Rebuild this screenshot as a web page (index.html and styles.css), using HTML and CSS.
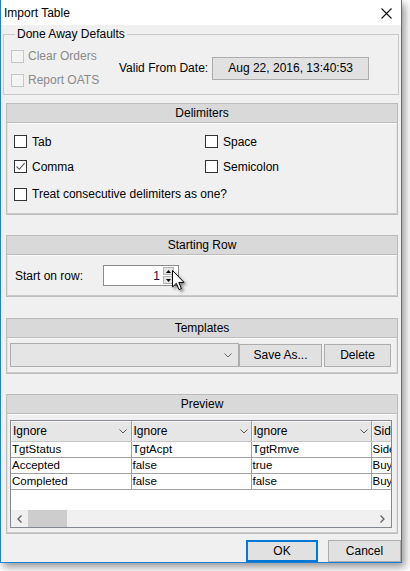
FILE: index.html
```html
<!DOCTYPE html>
<html>
<head>
<meta charset="utf-8">
<title>Import Table</title>
<link rel="stylesheet" href="styles.css">
</head>
<body>
<div class="window">
  <div class="titlebar">
    <span class="title">Import Table</span>
    <svg class="close" width="11" height="11" viewBox="0 0 11 11"><path d="M0.5 0.5L10.5 10.5M10.5 0.5L0.5 10.5" stroke="#111" stroke-width="1.1" fill="none"/></svg>
  </div>
  <div class="content">
    <fieldset class="group">
      <legend>Done Away Defaults</legend>
      <div class="group-row">
        <div class="checks">
          <div class="check disabled"><span class="box"></span><span>Clear Orders</span></div>
          <div class="check disabled"><span class="box"></span><span>Report OATS</span></div>
        </div>
        <span class="date-label">Valid From Date:</span>
        <span class="date-box">Aug 22, 2016, 13:40:53</span>
      </div>
    </fieldset>

    <section class="panel delims">
      <div class="panel-head">Delimiters</div>
      <div class="panel-body delim-grid">
        <div class="check"><span class="box"></span><span>Tab</span></div>
        <div class="check"><span class="box"></span><span>Space</span></div>
        <div class="check"><span class="box checked"><svg width="11" height="11" viewBox="0 0 11 11"><path d="M1.5 5.5L4.3 8.3L9.6 2.2" stroke="#555" stroke-width="1.1" fill="none"/></svg></span><span>Comma</span></div>
        <div class="check"><span class="box"></span><span>Semicolon</span></div>
        <div class="check wide"><span class="box"></span><span>Treat consecutive delimiters as one?</span></div>
      </div>
    </section>

    <section class="panel start">
      <div class="panel-head">Starting Row</div>
      <div class="panel-body start-body">
        <span class="start-label">Start on row:</span>
        <div class="spinner">
          <span class="spin-value">1</span>
          <div class="spin-buttons">
            <span class="spin-btn"><svg width="7" height="4" viewBox="0 0 7 4"><path d="M3.5 0L7 4H0Z" fill="#000"/></svg></span>
            <span class="spin-btn"><svg width="7" height="4" viewBox="0 0 7 4"><path d="M0 0H7L3.5 4Z" fill="#000"/></svg></span>
          </div>
        </div>
      </div>
    </section>

    <section class="panel templates">
      <div class="panel-head">Templates</div>
      <div class="panel-body tmpl-body">
        <div class="combo"><svg width="8" height="5" viewBox="0 0 8 5"><path d="M0.5 0.5L4 4L7.5 0.5" stroke="#666" fill="none"/></svg></div>
        <button class="btn save">Save As...</button>
        <button class="btn delete">Delete</button>
      </div>
    </section>

    <section class="panel preview">
      <div class="panel-head">Preview</div>
      <div class="panel-body preview-body">
        <div class="grid">
          <div class="grid-view">
            <table class="tbl">
              <thead>
                <tr>
                  <th><span>Ignore</span><svg width="8" height="5" viewBox="0 0 8 5"><path d="M0.5 0.5L4 4L7.5 0.5" stroke="#555" fill="none"/></svg></th>
                  <th><span>Ignore</span><svg width="8" height="5" viewBox="0 0 8 5"><path d="M0.5 0.5L4 4L7.5 0.5" stroke="#555" fill="none"/></svg></th>
                  <th><span>Ignore</span><svg width="8" height="5" viewBox="0 0 8 5"><path d="M0.5 0.5L4 4L7.5 0.5" stroke="#555" fill="none"/></svg></th>
                  <th><span>Side</span><svg width="8" height="5" viewBox="0 0 8 5"><path d="M0.5 0.5L4 4L7.5 0.5" stroke="#555" fill="none"/></svg></th>
                </tr>
              </thead>
              <tbody>
                <tr><td>TgtStatus</td><td>TgtAcpt</td><td>TgtRmve</td><td>Side</td></tr>
                <tr><td>Accepted</td><td>false</td><td>true</td><td>Buy</td></tr>
                <tr><td>Completed</td><td>false</td><td>false</td><td>Buy</td></tr>
              </tbody>
            </table>
          </div>
          <div class="hscroll">
            <span class="arrow"><svg width="5" height="8" viewBox="0 0 5 8"><path d="M4.5 0.5L1 4L4.5 7.5" stroke="#606060" stroke-width="1.3" fill="none"/></svg></span>
            <div class="track"><span class="thumb"></span></div>
            <span class="arrow"><svg width="5" height="8" viewBox="0 0 5 8"><path d="M0.5 0.5L4 4L0.5 7.5" stroke="#606060" stroke-width="1.3" fill="none"/></svg></span>
          </div>
        </div>
      </div>
    </section>

    <div class="actions">
      <button class="btn ok">OK</button>
      <button class="btn cancel">Cancel</button>
    </div>
  </div>
  <svg class="cursor" width="16" height="24" viewBox="0 0 16 24"><path d="M0.5 0.5V17L4.3 13.3L7 19.6L9.4 18.6L6.8 12.4H12Z" fill="#fff" stroke="#000" stroke-width="1" stroke-linejoin="miter"/></svg>
</div>
</body>
</html>
```

FILE: styles.css
```css
* { box-sizing: border-box; }
html, body { margin: 0; padding: 0; background: #fff; }
body {
  font-family: "Liberation Sans", Arial, sans-serif;
  font-size: 12px;
  color: #000;
  width: 410px;
  height: 571px;
  overflow: hidden;
}
.window {
  position: relative;
  width: 402px;
  height: 563px;
  border: 1px solid #1c7fd8;
  border-top: 0;
  background: #f0f0f0;
  box-shadow: 3px 4px 8px rgba(0, 0, 0, 0.42);
  display: flex;
  flex-direction: column;
}
.titlebar {
  height: 25px;
  flex: none;
  background: #fff;
  display: flex;
  align-items: center;
  justify-content: space-between;
  padding: 0 9px 0 3px;
  line-height: 14px;
}
.close { margin-top: 2px; }
.content {
  flex: 1;
  display: flex;
  flex-direction: column;
}

/* group box */
.group {
  margin: 2px 2px 0 2px;
  padding: 3px 0 2px 7px;
  border: 1px solid #c9c9c9;
  min-width: 0;
  flex: none;
}
.group legend {
  padding: 0 2px;
  margin-left: 4px;
  line-height: 14px;
}
.group-row { display: flex; align-items: center; }
.checks { width: 108px; display: flex; flex-direction: column; }
.checks .check { height: 24px; }
.date-label { white-space: nowrap; }
.date-box {
  margin-left: 4px;
  width: 157px;
  height: 23px;
  line-height: 21px;
  text-align: center;
  background: #e1e1e1;
  border: 1px solid #adadad;
}

/* checkboxes */
.check { display: flex; align-items: center; gap: 5px; white-space: nowrap; }
.box {
  width: 13px;
  height: 13px;
  flex: none;
  border: 1px solid #333;
  background: #fff;
  display: flex;
  align-items: center;
  justify-content: center;
}
.check.disabled { color: #8a8a8a; gap: 4px; }
.check.disabled .box { border-color: #c6c6c6; background: #f4f4f4; }

/* panels */
.panel {
  margin: 8px 3px 0 5px;
  border: 1px solid #bcbcbc;
  background: #f0f0f0;
  flex: none;
}
.panel-head {
  height: 19px;
  line-height: 18px;
  text-align: center;
  background: #d9d9d9;
  border-bottom: 1px solid #bdbdbd;
}
.panel-body {
  border: 1px solid #e2e2e2;
  border-top-color: #fafafa;
  border-bottom-color: #c9c9c9;
}
.delims .panel-body { height: 91px; }
.delim-grid {
  display: grid;
  grid-template-columns: 191px 1fr;
  grid-template-rows: 25px 25px 25px;
  row-gap: 0;
  padding: 5px 0 0 6px;
}
.delim-grid .wide { grid-column: 1 / 3; margin-top: 5px; }

.start { margin-top: 20px; }
.start-body {
  height: 41px;
  display: flex;
  align-items: center;
  padding-left: 7px;
}
.start-label { width: 88px; }
.spinner {
  width: 76px;
  height: 21px;
  background: #fff;
  border: 1px solid #8c8c8c;
  display: flex;
  align-items: center;
  padding: 1px 4px 1px 0;
}
.spin-value { flex: 1; text-align: right; padding-right: 3px; color: #101040; }
.spin-buttons {
  width: 11px;
  height: 17px;
  display: flex;
  flex-direction: column;
  gap: 1px;
}
.spin-btn {
  flex: 1;
  background: #e4e4e4;
  border: 1px solid #b4b4b4;
  display: flex;
  align-items: center;
  justify-content: center;
}
.spin-btn svg { width: 5px; height: 3px; }

.templates { margin-top: 21px; }
.tmpl-body {
  height: 35px;
  display: flex;
  align-items: center;
  padding: 0 3px 1px 2px;
}
.combo {
  width: 229px;
  height: 24px;
  background: #e5e5e5;
  border: 1px solid #acacac;
  display: flex;
  align-items: center;
  justify-content: flex-end;
  padding-right: 6px;
}
.btn {
  font-family: "Liberation Sans", Arial, sans-serif;
  font-size: 12px;
  color: #000;
  background: #e1e1e1;
  border: 1px solid #adadad;
  padding: 0;
  margin: 0;
}
.save { width: 83px; height: 23px; margin-left: 0; }
.delete { width: 67px; height: 23px; margin-left: 2px; }

.preview { margin-top: 20px; }
.preview-body { height: 119px; padding: 5px 2px 0 2px; }
.grid {
  width: 382px;
  height: 108px;
  border: 1px solid #828790;
  background: #fff;
  display: flex;
  flex-direction: column;
}
.grid-view { flex: 1; overflow: hidden; }
.tbl {
  border-collapse: collapse;
  table-layout: fixed;
  width: 480px;
  font-size: 11.5px;
}
.tbl th, .tbl td {
  width: 120px;
  padding: 0 0 0 1px;
  text-align: left;
  font-weight: normal;
  white-space: nowrap;
  overflow: hidden;
  border-right: 1px solid #a0a0a0;
}
.tbl th {
  height: 20px;
  background: #e6e6e6;
  box-shadow: inset 1px 1px 0 #fafafa;
  border-bottom: 1px solid #c8c8c8;
  padding-left: 2px;
  font-size: 12px;
}
.tbl th span { display: inline-block; width: 106px; }
.tbl th svg { vertical-align: middle; }
.tbl td {
  height: 16px;
  line-height: 15px;
  border-bottom: 1px solid #a0a0a0;
}
.hscroll {
  height: 17px;
  flex: none;
  display: flex;
  background: #f0f0f0;
}
.arrow {
  width: 17px;
  display: flex;
  align-items: center;
  justify-content: center;
}
.track { flex: 1; display: flex; }
.thumb { width: 39px; background: #cdcdcd; }

.actions {
  display: flex;
  justify-content: flex-end;
  gap: 10px;
  margin-top: 6px;
  flex: none;
}
.ok {
  width: 72px;
  height: 22px;
  border: 2px solid #0078d7;
}
.cancel { width: 73px; height: 22px; }

.cursor {
  position: absolute;
  left: 171px;
  top: 270px;
  filter: drop-shadow(2px 2px 1.5px rgba(0, 0, 0, 0.45));
}
```
